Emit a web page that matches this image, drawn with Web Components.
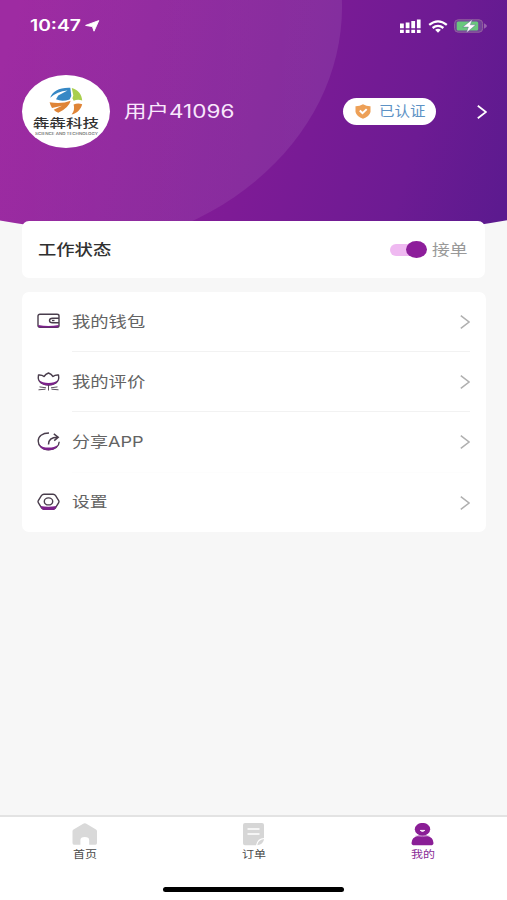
<!DOCTYPE html>
<html lang="zh-CN">
<head>
<meta charset="utf-8">
<title>我的</title>
<style>
html,body{margin:0;height:100%}
body{background:#f7f7f7;font-family:Inter,"Noto Sans CJK SC",sans-serif;overflow:hidden}
</style>
</head>
<body>
<profile-page></profile-page>
<script>
const define=(name,html,init)=>customElements.define(name,class extends HTMLElement{
  constructor(){super();this.attachShadow({mode:'open'}).innerHTML=typeof html==='function'?html(this):html}
  connectedCallback(){if(init)init(this)}
});

/* Text widened horizontally to fill the width given in its attribute. */
define('wide-text',`<style>
:host{display:block;flex:none;white-space:nowrap;line-height:1.4}
span{display:inline-block;transform-origin:0 50%}
</style><span><slot></slot></span>`,el=>{
  const w=+el.getAttribute('width');
  el.style.width=w+'px';
  const s=el.shadowRoot.querySelector('span');
  s.style.transform=`scaleX(${w/s.offsetWidth})`;
});

define('status-bar',`<style>
:host{display:flex;align-items:center;height:20px;padding:0 20px 0 30px;color:#fff}
wide-text{font-size:15.5px;font-weight:600}
.nav{margin:0 auto 0 4px}
.wifi{margin:0 6px 0 7px}
svg{display:block}
</style>
<wide-text width="51">10:47</wide-text>
<svg class="nav" width="15" height="12" viewBox="0 0 15 12"><path d="M.6 5.4 13.8.6 9 11.2 7.400 6.600Z" fill="#fff" stroke="#fff" stroke-width=".9" stroke-linejoin="round"/></svg>
<svg width="22" height="15" viewBox="0 0 22 15" fill="#fff"><path d="M1 4.5h3.8v4.8H1zM6.7 3.6h3.8v5.7H6.7zM12.3 2h3.8v7.3h-3.8zM17.9.5h3.7v8.8h-3.7z"/><path d="M1 10.8h3.8V14H1zM6.7 10.8h3.8V14H6.7zM12.3 10.8h3.8V14h-3.8zM17.900 10.800h3.700V14h-3.700z"/></svg>
<svg class="wifi" width="20" height="13" viewBox="0 0 20 13" fill="none" stroke="#fff" stroke-width="2.3"><path d="M1.2 4.9Q10-2.1 18.8 4.9"/><path d="M4.6 8Q10 3.7 15.4 8"/><path d="M7.1 9.7Q10 7.8 12.9 9.7L10 12.7Z" fill="#fff" stroke="none"/></svg>
<svg width="33" height="14" viewBox="0 0 33 14"><rect x=".6" y=".8" width="28" height="12.4" rx="3.6" fill="#74419a" stroke="#94649f"/><path d="M30 4.3Q33 6 33 7T30 9.8Z" fill="#9862ae"/><rect x="2.7" y="2.6" width="21.5" height="8.8" rx="1.5" fill="#69c77d"/><path d="M18.4.4 8.8 8h5.6l-2 5.8 9.4-8h-5.5Z" fill="#fff" stroke="#65509a" stroke-width=".4"/></svg>`);

define('company-avatar',`<style>
:host{display:flex;flex-direction:column;align-items:center;flex:none;width:88px;height:73px;border-radius:50%;background:#fff;box-sizing:border-box;padding-top:12px;color:#333}
svg{display:block}
.name{font-size:12.5px;font-weight:500;line-height:17px}
.sub{font-size:3.2px;line-height:4px;font-weight:600;color:#777}
</style>
<svg width="34" height="28" viewBox="0 0 34 28"><path d="M1.2 10.8C3 4.5 11 .2 21.3.8L22.3 9 20.6 12.4Q13 15.2 7 12.3L9.2 8.5 18.5 3.4Q8 4.1 1.2 10.8Z" fill="#3688c5"/><path d="M22.8 1C28.7 2.4 33 7.6 33.2 13.6Q29 12 24.7 13.7L23.4 11.2 24.3 8.4Z" fill="#a9cf4d"/><path d="M.6 15.300Q12.600 17.400 21.700 13.800Q19.500 21.300 9.300 25.700Q6.500 24.600 4.700 22.800L13 18.800 3 21Q1.400 18.700.6 15.300Z" fill="#df8437"/><path d="M24.600 17.400Q29 15.900 33.200 17.200C31.900 22.200 28.500 25.800 22.600 27.600Q26.200 22.600 24.600 17.400Z" fill="#df8437"/></svg>
<wide-text class="name" width="66">犇犇科技</wide-text>
<wide-text class="sub" width="63">SCIENCE AND TECHNOLOGY</wide-text>`);

define('verified-badge',`<style>
:host{display:flex;align-items:center;flex:none;box-sizing:border-box;width:93px;height:27px;padding-left:12px;gap:8px;border-radius:14px;background:#fff;color:#5d92c5;font-size:13.2px}
wide-text{margin-top:-1px}
</style>
<svg width="16" height="15" viewBox="0 0 16 15"><path d="M8 .3Q11.5 2.3 15.5 2.2V8Q14.3 12.5 8 14.8 1.7 12.5.5 8V2.2Q4.5 2.3 8 .3Z" fill="#eda057"/><path d="m4.8 6.5 2.7 2.7 4.2-4.1" fill="none" stroke="#fff" stroke-width="2"/></svg>
<wide-text width="47">已认证</wide-text>`);

define('chevron-icon',`<style>:host{display:block;flex:none;width:10px;height:14px}svg{display:block}path{stroke:currentColor;stroke-width:var(--weight,1.5)}</style>
<svg width="10" height="14" viewBox="0 0 10 14" fill="none"><path d="m.8.7 8.2 6.3-8.2 6.3"/></svg>`);

define('profile-header',`<style>
:host{display:grid;height:225px}
:host>*{grid-area:1/1}
.art{width:507px;height:225px;display:block}
.content{display:flex;flex-direction:column;padding-top:16px;color:#fff}
.user{display:flex;align-items:center;padding:0 20px 0 22px;margin-top:39px}
.name{margin:0 auto 0 14px;font-size:18px;color:#f9e7fc}
chevron-icon{margin-left:41px;--weight:1.8}
</style>
<svg class="art" viewBox="0 0 507 225"><defs>
<linearGradient id="base" gradientUnits="userSpaceOnUse" x1="0" y1="70" x2="500" y2="220"><stop offset="0" stop-color="#981d9c"/><stop offset=".5" stop-color="#7e1b96"/><stop offset=".8" stop-color="#6d1b93"/><stop offset="1" stop-color="#5c1a8f"/></linearGradient>
<linearGradient id="glow" x1="0" y1="0" x2="1" y2="0"><stop offset="0" stop-color="#fff" stop-opacity=".045"/><stop offset="1" stop-color="#fff" stop-opacity=".085"/></linearGradient>
<clipPath id="edge"><path d="M0 0H507V220.3Q254 264 0 220.5Z"/></clipPath></defs>
<g clip-path="url(#edge)"><path d="M0 0H507V225H0Z" fill="url(#base)"/><ellipse cx="47" cy="7" rx="295" ry="246" fill="url(#glow)"/></g></svg>
<div class="content"><status-bar></status-bar>
<div class="user"><company-avatar></company-avatar><wide-text class="name" width="110">用户41096</wide-text><verified-badge></verified-badge><chevron-icon></chevron-icon></div></div>`);

define('toggle-switch',`<style>
:host{display:flex;align-items:center;justify-content:flex-end;width:33px;height:12px;border-radius:6px;background:#efb9f1;margin-right:9px}
i{width:21.5px;height:17.5px;flex:none;border-radius:50%;background:#8d1e9b;margin-right:-4px}
</style><i></i>`);

define('work-status',`<style>
:host{display:flex;align-items:center;box-sizing:border-box;height:57px;width:463px;margin:-4px 0 0 22px;padding:0 17px 0 16px;border-radius:7px;background:#fff;position:relative}
.label{font-size:14.8px;font-weight:500;color:#303030;margin:1px auto 0 0}
.state{font-size:14.8px;color:#999;margin-top:1px}
</style>
<wide-text class="label" width="73">工作状态</wide-text><toggle-switch></toggle-switch><wide-text class="state" width="36">接单</wide-text>`);

const icons={
wallet:`<path d="M3 1.3h17Q22 1.3 22 3v9.5q0 1.8-2 1.8H3q-2 0-2-1.8V3q0-1.7 2-1.7Z"/><path d="M22 5.2h-6.5q-3 0-3 2.2t3 2.3H22"/><path d="M15 7.5h2.5"/><path d="M1.2 12q10 1.8 20.6 0v1.1q-.4 1.4-2 1.4H3q-1.5 0-1.8-1.5Z" class="p"/>`,
flower:`<path d="M1.500 3Q5 2.700 7 4.500 8.600 2 11.500 1 14.400 2 16 4.500 18 2.700 21.500 3 22.500 8.500 19 11 16 13 11.500 13 7 13 4 11 .5 8.500 1.500 3Z" stroke-linejoin="round"/><path class="p" d="M1.700 7.800Q5.500 11 11.500 11T21.300 7.800Q19.400 13.600 11.500 13.600T1.700 7.800Z"/><path d="M11.500 13v5.500M2.500 14.900l6.500.9M20.500 14.900l-6.500.9M1.500 17.800l7-.6M21.500 17.800l-7-.6" stroke-width=".9"/>`,
share:`<path d="M12 1C5.200 1 1.200 4.500 1.200 9S5 17.800 11.500 17.800 22 14.500 22.200 9.800"/><path d="M11.500 12.500Q11.300 5.400 20.500 5.200M16.800 1.900 21.200 5.200 17.200 8.600" stroke-width="1.5"/><path class="p" d="M2.100 12.700Q5.700 15.600 11.500 15.600T21.200 12.700Q18.800 18.300 11.500 18.300T2.100 12.700Z"/>`,
settings:`<path d="M7 1.2h9Q17.8 1.3 18.6 2.6l3.1 5q.6 1 0 2l-3.1 5q-.8 1.5-2.5 1.6H7Q5.3 16.1 4.4 14.6l-3.1-5q-.6-1 0-2l3.1-5Q5.3 1.3 7 1.2Z"/><ellipse cx="11.5" cy="8.4" rx="4.2" ry="3.5"/><path class="p" d="M3.4 13.100Q11 14.300 19.600 13.100 18.300 17 16.300 17H7Q4.700 17 3.400 13.100Z"/>`
};
define('menu-row',el=>{
  const k=el.getAttribute('icon'),h={wallet:16,flower:19,share:19,settings:18}[k];
  return `<style>
:host{display:grid;grid-template-columns:35px 1fr 10px;align-items:center;height:60.2px;box-sizing:border-box;padding:0 16px 0 15px;font-size:14.8px;color:#636363;position:relative}
svg{overflow:visible;display:block;fill:none;stroke:#493d4c;stroke-width:1.4;margin-top:-2px}
.p{fill:#7c218b;stroke:none}
chevron-icon{color:#b0b0b0}
:host(:not([last]))::after{content:"";position:absolute;left:50px;right:16px;bottom:0;height:1px;background:#f2f2f2}
:host([faint])::after{background:#fdfdfd!important}
</style><svg width="23" height="${h}" viewBox="0 0 23 ${h}">${icons[k]}</svg><wide-text width="${el.getAttribute('width')}"><slot></slot></wide-text><chevron-icon></chevron-icon>`});

define('menu-panel',`<style>:host{display:block;box-sizing:border-box;width:464px;height:240px;margin:14px 0 0 22px;border-radius:7px;background:#fff}</style><slot></slot>`);

const tabs={
home:`<path d="M10.8 1Q12.8-.4 14.8 1L24 6.5q1 .7 1 1.7V20q0 1.7-1.5 1.7H17.2v-4.4q0-3.3-4.4-3.3t-4.4 3.3v4.4H2Q.5 21.7.5 20V8.2Q.5 7.2 1.5 6.5Z" fill="#d9d9d9"/>`,
order:`<path d="M4 0h17q2 0 2 2v13q-6.500 0-8 7.300H4q-2 0-2-2V2q0-2 2-2Z" fill="#d6d6d6"/><path d="M16.300 22.300q.7-5.800 6.700-6.400-.5 5.400-6.700 6.400Z" fill="#d6d6d6"/><path d="M6.500 6h12M6.500 11h12" stroke="#fff" stroke-width="1.500"/>`,
me:`<ellipse cx="12.5" cy="6.2" rx="7.7" ry="6.3" fill="#8a1e96"/><path d="M8.5 12.6h8Q23.500 14.500 23.500 20q0 2.300-3 2.300h-16q-3 0-3-2.300Q1.500 14.500 8.500 12.600Z" fill="#8a1e96"/><path d="M5.500 12.700Q12.500 14.500 19.500 12.700" fill="none" stroke="#d2a5d8" stroke-width=".6"/><path d="M10.200 7.400q2.300 2.200 4.600 0Z" fill="#fff" stroke="#fff" stroke-width=".8"/>`};
define('tab-item',el=>`<style>
:host{display:flex;flex-direction:column;align-items:center;color:#4a4a4a;font-size:10px}
:host([active]){color:#8a2c97}
svg{display:block}wide-text{margin-top:1px}
</style><svg width="25" height="23" viewBox="0 0 25 23">${tabs[el.getAttribute('icon')]}</svg><wide-text width="24"><slot></slot></wide-text>`);

define('tab-bar',`<style>
:host{display:flex;flex-direction:column;margin-top:auto;height:85px;box-sizing:border-box;border-top:2px solid #e3e3e3;background:#fff;padding-top:6px}
nav{display:grid;grid-template-columns:repeat(3,1fr)}
.grip{width:181px;height:5px;border-radius:3px;background:#000;margin:auto auto 8px}
</style><nav><tab-item icon="home">首页</tab-item><tab-item icon="order">订单</tab-item><tab-item icon="me" active>我的</tab-item></nav><div class="grip"></div>`);

define('profile-page',`<style>:host{display:flex;flex-direction:column;width:507px;height:900px;background:#f7f7f7}</style>
<profile-header></profile-header>
<work-status></work-status>
<menu-panel>
<menu-row icon="wallet" width="73">我的钱包</menu-row>
<menu-row icon="flower" width="73">我的评价</menu-row>
<menu-row icon="share" width="72" faint>分享APP</menu-row>
<menu-row icon="settings" width="36" last>设置</menu-row>
</menu-panel>
<tab-bar></tab-bar>`);
</script>
</body>
</html>
